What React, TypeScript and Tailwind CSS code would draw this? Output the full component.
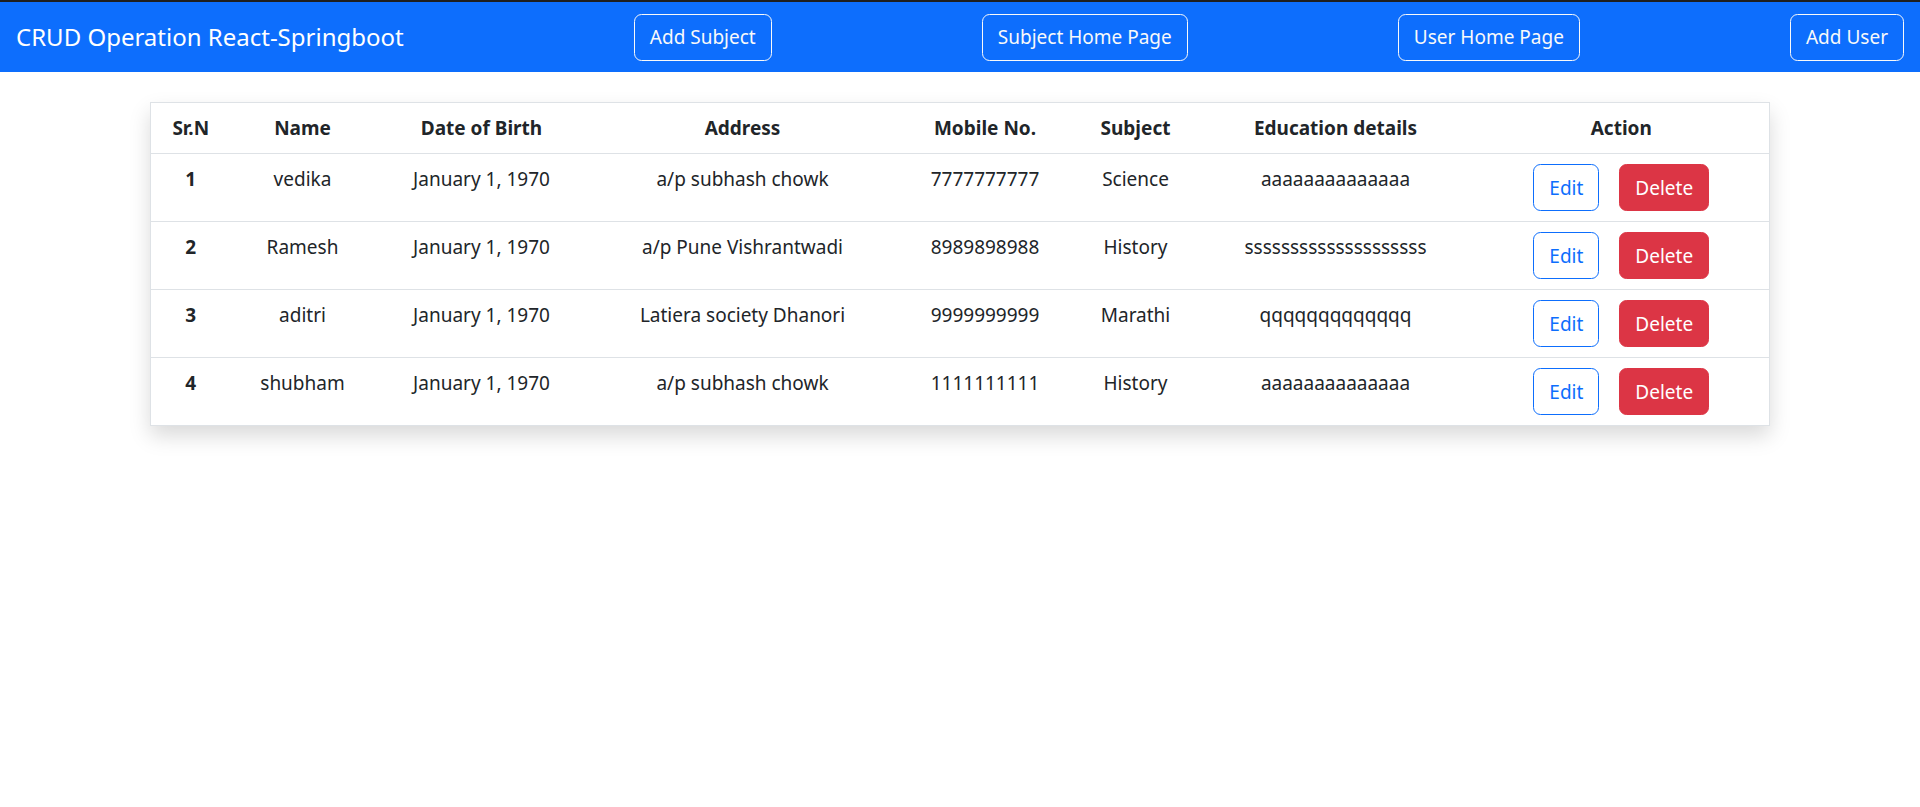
import React from "react";

const rows = [
  { id: 1, name: "vedika", dob: "January 1, 1970", address: "a/p subhash chowk", mobile: "7777777777", subject: "Science", edu: "aaaaaaaaaaaaaa" },
  { id: 2, name: "Ramesh", dob: "January 1, 1970", address: "a/p Pune Vishrantwadi", mobile: "8989898988", subject: "History", edu: "ssssssssssssssssssss" },
  { id: 3, name: "aditri", dob: "January 1, 1970", address: "Latiera society Dhanori", mobile: "9999999999", subject: "Marathi", edu: "qqqqqqqqqqqqq" },
  { id: 4, name: "shubham", dob: "January 1, 1970", address: "a/p subhash chowk", mobile: "1111111111", subject: "History", edu: "aaaaaaaaaaaaaa" },
];

const navBtn =
  "h-[47px] px-[15px] rounded-[7.5px] border border-[#f8f9fa] text-[#f8f9fa] text-[19px] leading-[30px] whitespace-nowrap";

export default function App() {
  return (
    <div className="min-h-screen bg-white text-[#212529] text-[19px] leading-[30px] font-['Segoe_UI','Noto_Sans',sans-serif]">
      <div className="h-[2px] bg-[#1e1e1e]" />
      <nav className="h-[70px] bg-[#0d6efd] flex items-center justify-between px-[16px]">
        <span className="text-[24px] leading-[37.5px] text-white mr-[20px] whitespace-nowrap">
          CRUD Operation React-Springboot
        </span>
        <button className={navBtn}>Add Subject</button>
        <button className={navBtn}>Subject Home Page</button>
        <button className={navBtn}>User Home Page</button>
        <button className={navBtn}>Add User</button>
      </nav>
      <div className="w-[1650px] mx-auto px-[15px] pt-[30px]">
        <table className="w-full table-fixed border-collapse border border-[#dee2e6] shadow-[0_10px_20px_rgba(0,0,0,0.15)] text-center">
          <colgroup>
            <col className="w-[80px]" />
            <col className="w-[144px]" />
            <col className="w-[214px]" />
            <col className="w-[308px]" />
            <col className="w-[177px]" />
            <col className="w-[124px]" />
            <col className="w-[276px]" />
            <col />
          </colgroup>
          <thead>
            <tr className="border-b border-[#dee2e6]">
              {["Sr.N", "Name", "Date of Birth", "Address", "Mobile No.", "Subject", "Education details", "Action"].map((h) => (
                <th key={h} className="py-[10px] px-[10px] font-bold align-top">
                  {h}
                </th>
              ))}
            </tr>
          </thead>
          <tbody>
            {rows.map((r) => (
              <tr key={r.id} className="border-b border-[#dee2e6]">
                <th className="py-[10px] px-[10px] font-bold align-top">{r.id}</th>
                <td className="py-[10px] px-[10px] align-top">{r.name}</td>
                <td className="py-[10px] px-[10px] align-top">{r.dob}</td>
                <td className="py-[10px] px-[10px] align-top whitespace-nowrap">{r.address}</td>
                <td className="py-[10px] px-[10px] align-top">{r.mobile}</td>
                <td className="py-[10px] px-[10px] align-top">{r.subject}</td>
                <td className="py-[10px] px-[10px] align-top whitespace-nowrap">{r.edu}</td>
                <td className="py-[10px] px-[10px] align-top">
                  <div className="flex justify-center gap-[20px]">
                    <button className="h-[47px] px-[15px] rounded-[7.5px] border border-[#0d6efd] text-[#0d6efd] text-[19px]">
                      Edit
                    </button>
                    <button className="h-[47px] px-[15px] rounded-[7.5px] border border-[#dc3545] bg-[#dc3545] text-white text-[19px]">
                      Delete
                    </button>
                  </div>
                </td>
              </tr>
            ))}
          </tbody>
        </table>
      </div>
    </div>
  );
}
